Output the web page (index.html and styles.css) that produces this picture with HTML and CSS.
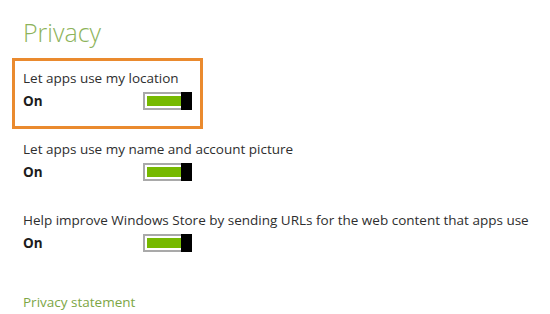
FILE: index.html
```html
<!DOCTYPE html>
<html lang="en">

<head>
    <meta charset="UTF-8">
    <title>Privacy</title>
    <link rel="stylesheet" href="styles.css">
</head>

<body>

    <div class="pane">
        <h1 class="pane-title">Privacy</h1>

        <div class="settings">
            <!-- highlighted setting -->
            <div class="setting setting-active">
                <div class="setting-label">Let apps use my location</div>
                <div class="setting-state">
                    <span class="state-text">On</span>
                    <span class="toggle"><span class="toggle-track"><span class="toggle-fill"></span></span><span class="toggle-thumb"></span></span>
                </div>
            </div>

            <div class="setting">
                <div class="setting-label">Let apps use my name and account picture</div>
                <div class="setting-state">
                    <span class="state-text">On</span>
                    <span class="toggle"><span class="toggle-track"><span class="toggle-fill"></span></span><span class="toggle-thumb"></span></span>
                </div>
            </div>

            <div class="setting">
                <div class="setting-label">Help improve Windows Store by sending URLs for the web content that apps use</div>
                <div class="setting-state">
                    <span class="state-text">On</span>
                    <span class="toggle"><span class="toggle-track"><span class="toggle-fill"></span></span><span class="toggle-thumb"></span></span>
                </div>
            </div>
        </div>

        <a class="privacy-link" href="#">Privacy statement</a>
    </div>

</body>

</html>
```

FILE: styles.css
```css
body {
    margin: 0;
    background: #fff;
    font-family: "Open Sans", "Noto Sans", sans-serif;
    color: #2e2e2e;
}

.pane {
    padding: 14px 0 0 12px;
}

.pane-title {
    margin: 0 0 8px 11px;
    font-size: 25px;
    font-weight: 300;
    line-height: 36px;
    color: #8db35a;
}

.settings {
    display: flex;
    flex-direction: column;
    align-items: flex-start;
}

.setting {
    border: 3px solid transparent;
    padding: 7px 8px 16px;
}

.setting-active {
    border-color: #ea8a2e;
}

.setting-label {
    font-size: 13.5px;
    line-height: 20px;
    white-space: nowrap;
}

.setting-state {
    width: 169px;
    margin-top: 4px;
    display: flex;
    justify-content: space-between;
    align-items: center;
}

.state-text {
    font-size: 13.5px;
    font-weight: 700;
    color: #1c1c1c;
}

.toggle {
    display: flex;
    width: 49px;
    height: 18px;
}

.toggle-track {
    flex: 1;
    display: flex;
    border: 2px solid #a9a9a9;
    border-right: none;
    padding: 2px 0 2px 2px;
}

.toggle-fill {
    flex: 1;
    background: #76b900;
}

.toggle-thumb {
    width: 11px;
    background: #000;
}

.privacy-link {
    display: inline-block;
    margin: 21px 0 0 11px;
    font-size: 13.5px;
    line-height: 20px;
    color: #7da645;
    text-decoration: none;
}
```
